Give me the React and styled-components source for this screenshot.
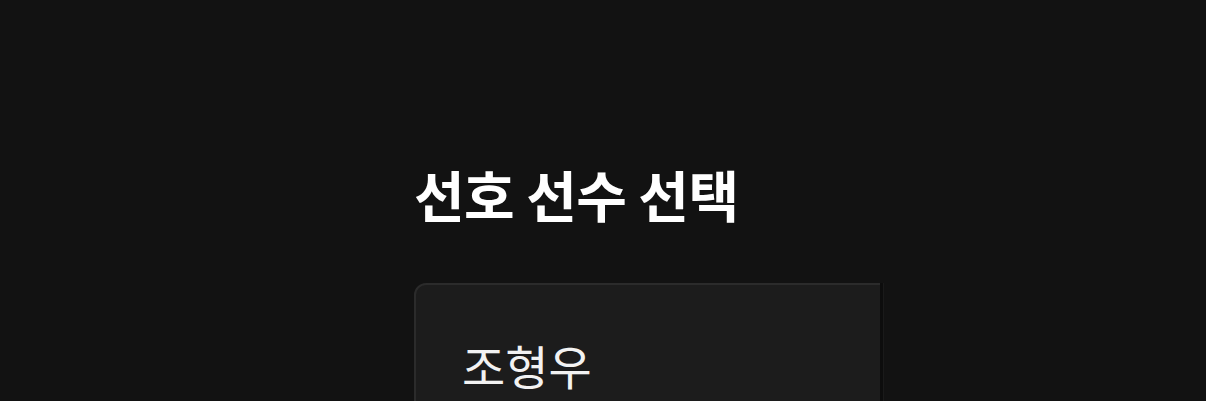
import React from 'react'
import styled, { createGlobalStyle } from 'styled-components'

const GlobalStyle = createGlobalStyle`
  html, body {
    margin: 0;
    background: #121212;
  }
  body {
    font-family: "Noto Sans CJK KR", "Noto Sans", sans-serif;
    color: #ffffff;
  }
`

const Page = styled.div`
  width: 1206px;
  height: 401px;
  overflow: hidden;
  background: #121212;
  padding: 160px 0 0 414px;
  box-sizing: border-box;
`

const Title = styled.h2`
  margin: 0;
  font-size: 55px;
  font-weight: 700;
  line-height: 1.2;
  letter-spacing: -0.5px;
  color: #ffffff;
`

const Viewport = styled.div`
  margin-top: 57px;
  width: 470px;
  display: flex;
`

const Clip = styled.div`
  width: 466px;
  overflow: hidden;
`

const Edge = styled.div`
  width: 3px;
  background: #0d0d0d;
  border-right: 1px solid #1a1a1a;
  align-self: stretch;
`

const Card = styled.div`
  width: 600px;
  height: 200px;
  background: #1c1c1c;
  border: 2px solid #2b2b2b;
  border-radius: 12px;
  box-sizing: border-box;
  padding: 56px 0 0 46px;
`

const Name = styled.div`
  font-size: 47px;
  font-weight: 400;
  line-height: 1;
  color: #f2f2f2;
`

const App = () => {
  return (
    <>
      <GlobalStyle />
      <Page>
        <Title>선호 선수 선택</Title>
        <Viewport>
          <Clip>
            <Card>
              <Name>조형우</Name>
            </Card>
          </Clip>
          <Edge />
        </Viewport>
      </Page>
    </>
  )
}

export default App
